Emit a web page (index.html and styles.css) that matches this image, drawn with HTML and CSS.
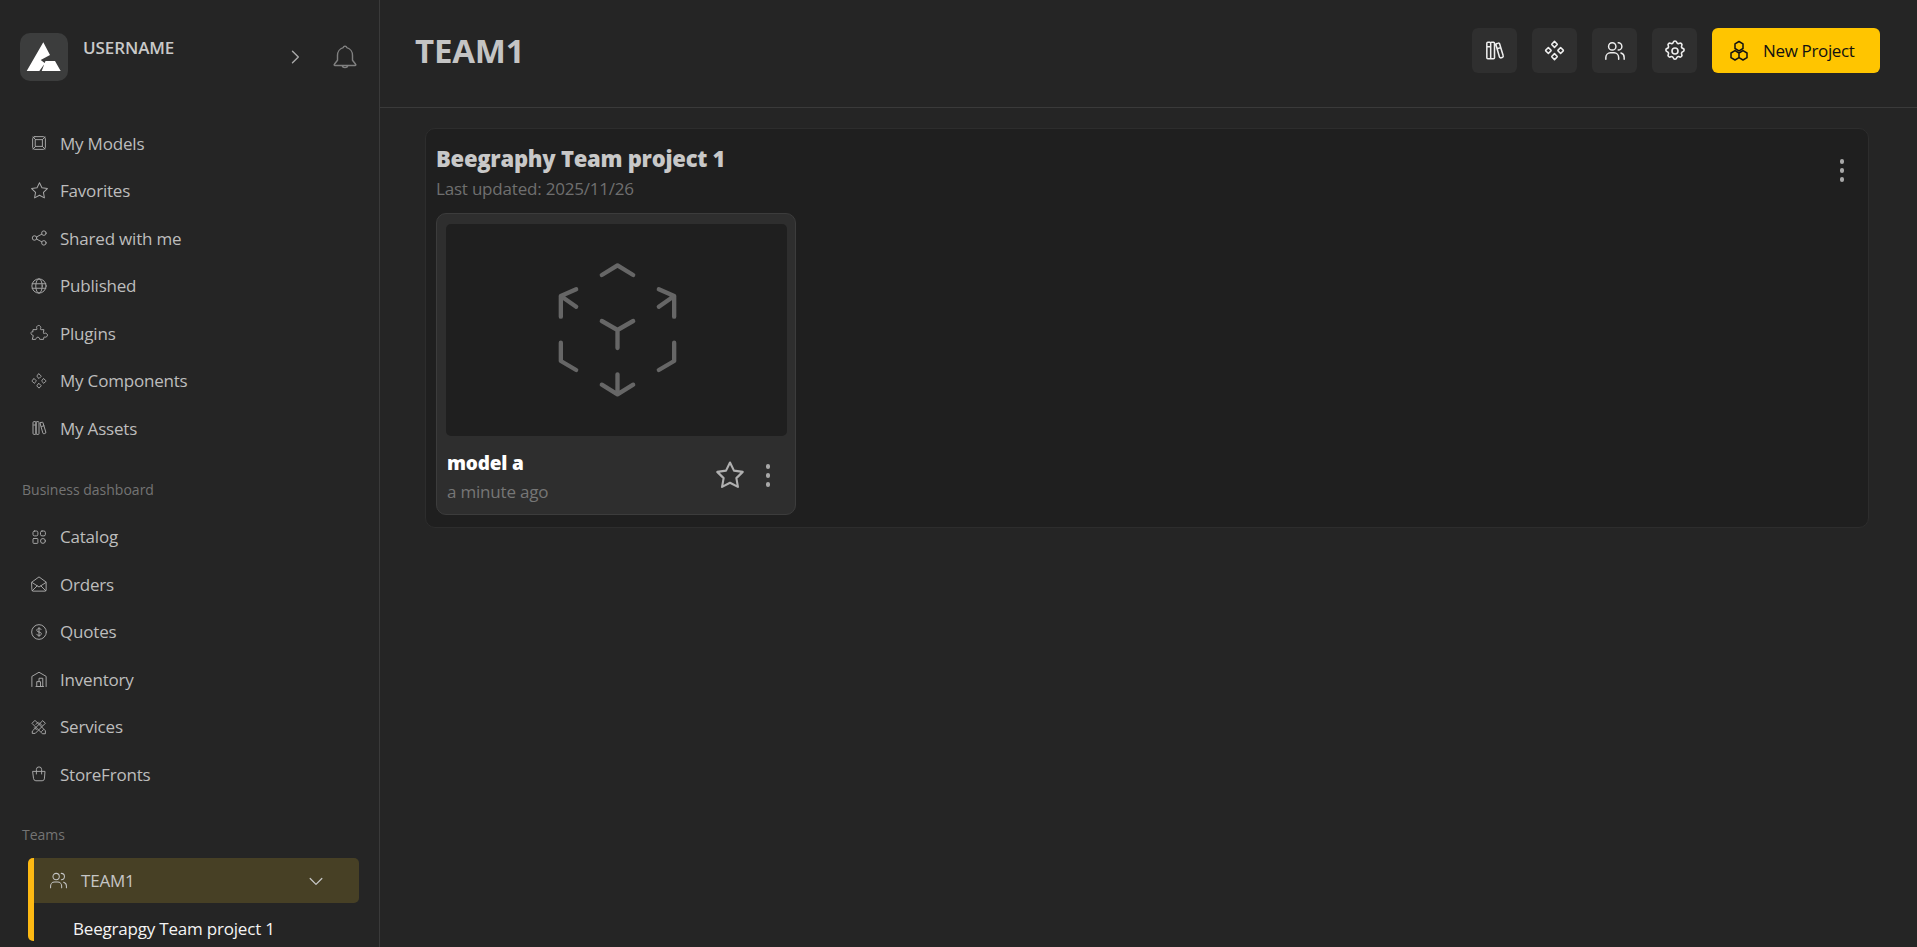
FILE: index.html
```html
<!DOCTYPE html>
<html lang="en">
<head>
<meta charset="utf-8">
<title>TEAM1</title>
<link rel="stylesheet" href="styles.css">
</head>
<body>
<svg class="defs" width="0" height="0" aria-hidden="true">
  <symbol id="i-books" viewBox="0 0 24 24"><path d="M4 4.500a1 1 0 0 1 1-1h2a1 1 0 0 1 1 1v15a1 1 0 0 1-1 1H5a1 1 0 0 1-1-1zM8 4.500a1 1 0 0 1 1-1h2a1 1 0 0 1 1 1v15a1 1 0 0 1-1 1H9a1 1 0 0 1-1-1zM5 8h2M14 5l2-.7a1 1 0 0 1 1.300.6l3.700 12.400a1.500 1.500 0 0 1-1 2l-1 .3a1.500 1.500 0 0 1-1.900-1L13.500 6a1 1 0 0 1 .5-1zM15.500 10l3-1"/></symbol>
  <symbol id="i-comp" viewBox="0 0 24 24"><path d="M12 2.500l2.700 2.700a.6.600 0 0 1 0 .8L12 8.700 9.300 6a.6.600 0 0 1 0-.8zM12 15.300l2.700 2.700a.6.600 0 0 1 0 .8L12 21.500l-2.700-2.700a.6.600 0 0 1 0-.8zM5.600 8.900l2.700 2.700a.6.600 0 0 1 0 .8l-2.700 2.700-2.700-2.700a.6.600 0 0 1 0-.8zM18.400 8.900l2.700 2.700a.6.600 0 0 1 0 .8l-2.700 2.700-2.700-2.700a.6.600 0 0 1 0-.8z"/></symbol>
  <symbol id="i-users" viewBox="0 0 24 24"><circle cx="9" cy="7" r="4"/><path d="M2 21v-2a5 5 0 0 1 5-5h4a5 5 0 0 1 5 5v2M15.500 3a4 4 0 0 1 0 8M18.500 14.200a5 5 0 0 1 3.500 4.800v2"/></symbol>
  <symbol id="i-gear" viewBox="0 0 24 24"><path d="M10.300 3.300a1.750 1.750 0 0 1 3.400 0 1.750 1.750 0 0 0 2.600 1.100 1.750 1.750 0 0 1 2.400 2.400 1.750 1.750 0 0 0 1.100 2.600 1.750 1.750 0 0 1 0 3.400 1.750 1.750 0 0 0-1.100 2.600 1.750 1.750 0 0 1-2.400 2.400 1.750 1.750 0 0 0-2.600 1.100 1.750 1.750 0 0 1-3.400 0 1.750 1.750 0 0 0-2.600-1.100 1.750 1.750 0 0 1-2.400-2.400 1.750 1.750 0 0 0-1.100-2.600 1.750 1.750 0 0 1 0-3.400 1.750 1.750 0 0 0 1.100-2.600 1.750 1.750 0 0 1 2.400-2.400 1.750 1.750 0 0 0 2.600-1.100z"/><circle cx="12" cy="12" r="3"/></symbol>
  <symbol id="i-star" viewBox="0 0 24 24"><path d="M12 3.200l2.800 5.700 6.200.9-4.500 4.400 1.100 6.200L12 17.500l-5.600 2.900 1.100-6.200L3 9.800l6.200-.9z"/></symbol>
</svg>

<div class="app">
  <aside class="sidebar">
    <div class="profile">
      <div class="logo">
        <svg viewBox="0 0 48 48" width="48" height="48"><path class="logo-mark" d="M23.300 9.300L30 22l-9.300 5 4.300 3.300L19.300 38H6.700zM25.500 28H35l5.700 10H21.700z"/></svg>
      </div>
      <div class="username">USERNAME</div>
      <svg class="chev-right" viewBox="0 0 24 24" width="20" height="20"><path d="M9 5l7 7-7 7"/></svg>
      <svg class="bell" viewBox="0 0 24 24" width="30" height="30"><path d="M9.500 18a2.700 2.700 0 0 0 5 0M12 2.500a1.500 1.500 0 0 1 1.400 1.200A6.300 6.300 0 0 1 18 10v3.800l2.500 3.200a.6.600 0 0 1-.5 1H4a.6.600 0 0 1-.5-1L6 13.800V10a6.300 6.300 0 0 1 4.600-6.300A1.500 1.500 0 0 1 12 2.500z"/></svg>
    </div>

    <nav class="nav nav-first">
      <a class="nav-item"><svg class="ico" viewBox="0 0 24 24"><rect x="3.500" y="3.500" width="17" height="17" rx="3"/><rect x="7.500" y="7.500" width="9" height="9"/><path d="M4 4l3.500 3.500M20 4l-3.500 3.500M4 20l3.500-3.500M20 20l-3.500-3.500"/></svg><span>My Models</span></a>
      <a class="nav-item"><svg class="ico ico-star"><use href="#i-star"/></svg><span>Favorites</span></a>
      <a class="nav-item"><svg class="ico" viewBox="0 0 24 24"><circle cx="6" cy="12" r="3"/><circle cx="18.500" cy="5.500" r="3"/><circle cx="18.500" cy="18.500" r="3"/><path d="M8.700 10.600l7-3.700M8.700 13.400l7 3.700"/></svg><span>Shared with me</span></a>
      <a class="nav-item"><svg class="ico" viewBox="0 0 24 24"><circle cx="12" cy="12" r="9.500"/><ellipse cx="12" cy="12" rx="4.300" ry="9.500"/><path d="M3 9h18M3 15h18"/></svg><span>Published</span></a>
      <a class="nav-item"><svg class="ico" viewBox="0 0 24 24"><path d="M4.500 7.500h3.800a1 1 0 0 0 .8-1.500 2.800 2.800 0 1 1 5 0 1 1 0 0 0 .8 1.500h3.600l-.6 4a1 1 0 0 0 1.400 1 2.700 2.700 0 1 1 .6 5 1 1 0 0 0-1.500.8l-.4 2.200h-4.500a1 1 0 0 1-.8-1.500 2.500 2.500 0 0 0-4.500 0 1 1 0 0 1-.9 1.500H3l1.300-4.500a1 1 0 0 0-1-1.200 2.600 2.600 0 0 1-.9-4.600 1 1 0 0 1 1 .3z"/></svg><span>Plugins</span></a>
      <a class="nav-item"><svg class="ico"><use href="#i-comp"/></svg><span>My Components</span></a>
      <a class="nav-item"><svg class="ico"><use href="#i-books"/></svg><span>My Assets</span></a>
    </nav>

    <div class="section-label">Business dashboard</div>
    <nav class="nav">
      <a class="nav-item"><svg class="ico" viewBox="0 0 24 24"><rect x="4" y="4" width="6.500" height="6.500" rx="2"/><rect x="14" y="4" width="6.500" height="6.500" rx="2"/><rect x="4" y="14" width="6.500" height="6.500" rx="1"/><circle cx="17.250" cy="17.250" r="3.250"/></svg><span>Catalog</span></a>
      <a class="nav-item"><svg class="ico" viewBox="0 0 24 24"><path d="M2.500 9.500L12 2.500l9.500 7V20a1.500 1.500 0 0 1-1.500 1.500H4A1.500 1.500 0 0 1 2.500 20zM2.800 10l9.200 6 9.200-6M3 21l6.500-6.500M21 21l-6.500-6.500"/></svg><span>Orders</span></a>
      <a class="nav-item"><svg class="ico" viewBox="0 0 24 24"><circle cx="12" cy="12" r="9.800"/><path d="M15 8.800c-.6-1-1.700-1.300-3-1.300-1.800 0-3 .8-3 2.200 0 3.200 6.200 1.500 6.200 4.700 0 1.400-1.400 2.100-3.200 2.100-1.400 0-2.600-.5-3.200-1.500M12 6v12"/></svg><span>Quotes</span></a>
      <a class="nav-item"><svg class="ico" viewBox="0 0 24 24"><path d="M2.500 22V8.500L12 3l9.500 5.500V22M9 22v-6.500h5V22M12 15.500V11h5v11M8 22h10"/></svg><span>Inventory</span></a>
      <a class="nav-item"><svg class="ico" viewBox="0 0 24 24"><path d="M7 3.500l13.500 13.500V21h-4L3 7.500zM3.500 17L17 3.500 20.500 7 7 20.500H3.500zM8 8.500l3-3M15.500 18l2.500-2.500M6 13l2.500 2.500M12.500 6.500L16 10"/></svg><span>Services</span></a>
      <a class="nav-item"><svg class="ico" viewBox="0 0 24 24"><path d="M4 8.500h16l-.8 10a3 3 0 0 1-3 2.500H7.800a3 3 0 0 1-3-2.500zM8.500 12V6a3.500 3.500 0 0 1 7 0v6"/></svg><span>StoreFronts</span></a>
    </nav>

    <div class="section-label section-label-teams">Teams</div>
    <div class="team">
      <div class="team-row">
        <svg class="ico-team"><use href="#i-users"/></svg>
        <span class="team-name">TEAM1</span>
        <svg class="chev-down" viewBox="0 0 24 24" width="20" height="20"><path d="M5 9l7 7 7-7"/></svg>
      </div>
      <div class="team-sub">Beegrapgy Team project 1</div>
    </div>
  </aside>

  <main class="main">
    <header class="topbar">
      <h1 class="page-title">TEAM1</h1>
      <div class="actions">
        <button class="icon-btn"><svg class="s23"><use href="#i-books"/></svg></button>
        <button class="icon-btn"><svg class="s23"><use href="#i-comp"/></svg></button>
        <button class="icon-btn"><svg class="s22"><use href="#i-users"/></svg></button>
        <button class="icon-btn"><svg class="s24"><use href="#i-gear"/></svg></button>
        <button class="new-btn">
          <svg viewBox="0 0 24 24" width="24" height="24"><path d="M12 2.500l4 2.300v4.700l-4 2.300-4-2.300V4.800zM8 11.700l4 2.300v4.700l-4 2.300-4-2.300V14zM16 11.700l4 2.300v4.700l-4 2.300-4-2.300V14z"/></svg>
          <span>New Project</span>
        </button>
      </div>
    </header>

    <section class="content">
      <div class="project">
        <div class="project-head">
          <div>
            <h2 class="project-title">Beegraphy Team project 1</h2>
            <div class="project-date">Last updated: 2025/11/26</div>
          </div>
          <div class="dots dots-project"><i></i><i></i><i></i></div>
        </div>
        <article class="card">
          <div class="thumb">
            <svg viewBox="435 425 374 414" width="125" height="138"><path d="M575 467l47-29 47 29M452 592v-62l46-20M452 530l46 32M792 592v-62l-46-20M792 530l-46 32M575 605l47 27 47-27M622 632v54M452 670v55l46 27M792 670v55l-46 27M622 765v60M575 796l47 29 47-29"/></svg>
          </div>
          <div class="card-foot">
            <div>
              <div class="model-name">model a</div>
              <div class="model-time">a minute ago</div>
            </div>
            <svg class="fav"><use href="#i-star"/></svg>
            <div class="dots dots-card"><i></i><i></i><i></i></div>
          </div>
        </article>
      </div>
    </section>
  </main>
</div>
</body>
</html>
```
FILE: styles.css
```css
* { box-sizing: border-box; }
html, body { margin: 0; height: 100%; overflow: hidden; }
body { background: #252525; color: #c8c8c8; font-family: "Open Sans", "Noto Sans", "Liberation Sans", sans-serif; font-size: 17px; letter-spacing: -.2px; }
.defs { position: absolute; }
svg { fill: none; stroke: currentColor; stroke-linecap: round; stroke-linejoin: round; flex: none; }
.app { display: flex; height: 947px; }

.sidebar { width: 380px; flex: none; height: 947px; overflow: hidden; border-right: 1px solid #3a3a3a; padding-top: 33px; }
.profile { display: flex; align-items: flex-start; padding: 0 19px 0 20px; height: 48px; }
.logo { width: 48px; height: 48px; border-radius: 10px; background: #3c3d3d; flex: none; }
.logo svg { display: block; }
.logo-mark { fill: #fff; stroke: none; }
.username { margin: 5px 0 0 15px; font-weight: 600; line-height: 20px; letter-spacing: -.1px; color: #c9c9c9; flex: 1; }
.chev-right { color: #a9a9a9; stroke-width: 1.7; margin: 14px 25px 0 0; }
.bell { color: #808080; stroke-width: 1.15; margin-top: 10px; }

.nav { display: flex; flex-direction: column; }
.nav-first { margin-top: 38.25px; }
.nav-item { display: flex; align-items: center; height: 47.5px; padding-left: 30px; gap: 12px; color: #bdbdbd; }
.ico { width: 18px; height: 18px; stroke-width: 1.3; color: #a8a8a8; }
.ico-star { width: 21px; height: 21px; margin: 0 -1.500px; stroke-width: 1.15; }
.section-label { font-size: 14px; line-height: 20px; color: #747474; padding-left: 22px; letter-spacing: 0; margin: 28px 0 13.25px; }
.section-label-teams { margin: 27.25px 0 13px; }

.team { margin-left: 28px; width: 331px; height: 83px; border-left: 6px solid #fdb913; border-radius: 5px 0 0 5px; }
.team-row { display: flex; align-items: center; height: 45px; background: #474025; border-radius: 0 5px 5px 0; padding-left: 15px; color: #c6c6c6; }
.ico-team { width: 19px; height: 19px; color: #c4c4c4; stroke-width: 1.3; }
.team-name { margin-left: 13px; flex: 1; }
.chev-down { color: #c8c8c8; stroke-width: 1.5; margin-right: 33px; }
.team-sub { margin: 14px 0 0 39px; color: #f4f4f4; line-height: 24px; white-space: nowrap; }

.main { flex: 1; min-width: 0; display: flex; flex-direction: column; }
.topbar { height: 108px; flex: none; display: flex; justify-content: space-between; padding: 28px 37px 0 35px; border-bottom: 1px solid #3a3a3a; }
.page-title { margin: 0; font-size: 33px; line-height: 46px; font-weight: 700; color: #c4c4c4; letter-spacing: -.2px; }
.actions { display: flex; gap: 15px; height: 45px; }
.icon-btn { width: 45px; height: 45px; border: 0; padding: 0; border-radius: 6px; background: #2f2f2f; color: #eee; display: flex; align-items: center; justify-content: center; }
.icon-btn svg { stroke-width: 1.6; }
.s22 { width: 22px; height: 22px; }
.s23 { width: 23px; height: 23px; }
.s24 { width: 24px; height: 24px; }
.new-btn { width: 168px; height: 45px; border: 0; padding: 0 0 0 15px; border-radius: 6px; background: #ffc500; color: #111; display: flex; align-items: center; gap: 12px; font: inherit; letter-spacing: -.35px; }
.new-btn svg { stroke-width: 1.5; }

.content { padding: 20px 48px 0 45px; }
.project { height: 400px; background: #1f1f1f; border: 1px solid #2d2d2d; border-radius: 10px; padding: 14px 10px; }
.project-head { display: flex; justify-content: space-between; align-items: flex-start; }
.project-title { margin: 0; font-size: 22px; line-height: 30px; font-weight: 800; color: #c8c8c8; letter-spacing: -.25px; }
.project-date { margin-top: 4px; line-height: 24px; color: #6f6f6f; }
.dots { display: flex; flex-direction: column; gap: 4.500px; flex: none; }
.dots i { display: block; width: 4.500px; height: 4.500px; border-radius: 50%; background: #a8a8a8; }
.dots-project { margin: 16px 14px 0 0; }
.card { width: 360px; height: 302px; margin-top: 12px; background: #2e2e2e; border: 1px solid #3c3c3c; border-radius: 10px; padding: 10px 8px 0 9px; }
.thumb { height: 212px; border-radius: 5px; background: #1f1f1f; display: flex; align-items: center; justify-content: center; }
.thumb svg { color: #666; stroke-width: 13; margin-left: 2px; }
.card-foot { display: flex; align-items: flex-start; padding: 14px 0 0 1px; }
.card-foot > div:first-child { flex: 1; }
.model-name { font-size: 19px; line-height: 26px; font-weight: 800; color: #fff; letter-spacing: -.2px; }
.model-time { margin-top: 4px; line-height: 24px; color: #767676; }
.fav { width: 34px; height: 34px; margin-top: 8px; color: #b0b0b0; stroke-width: 1.5; }
.dots-card { margin: 14px 17px 0 19px; }
```
